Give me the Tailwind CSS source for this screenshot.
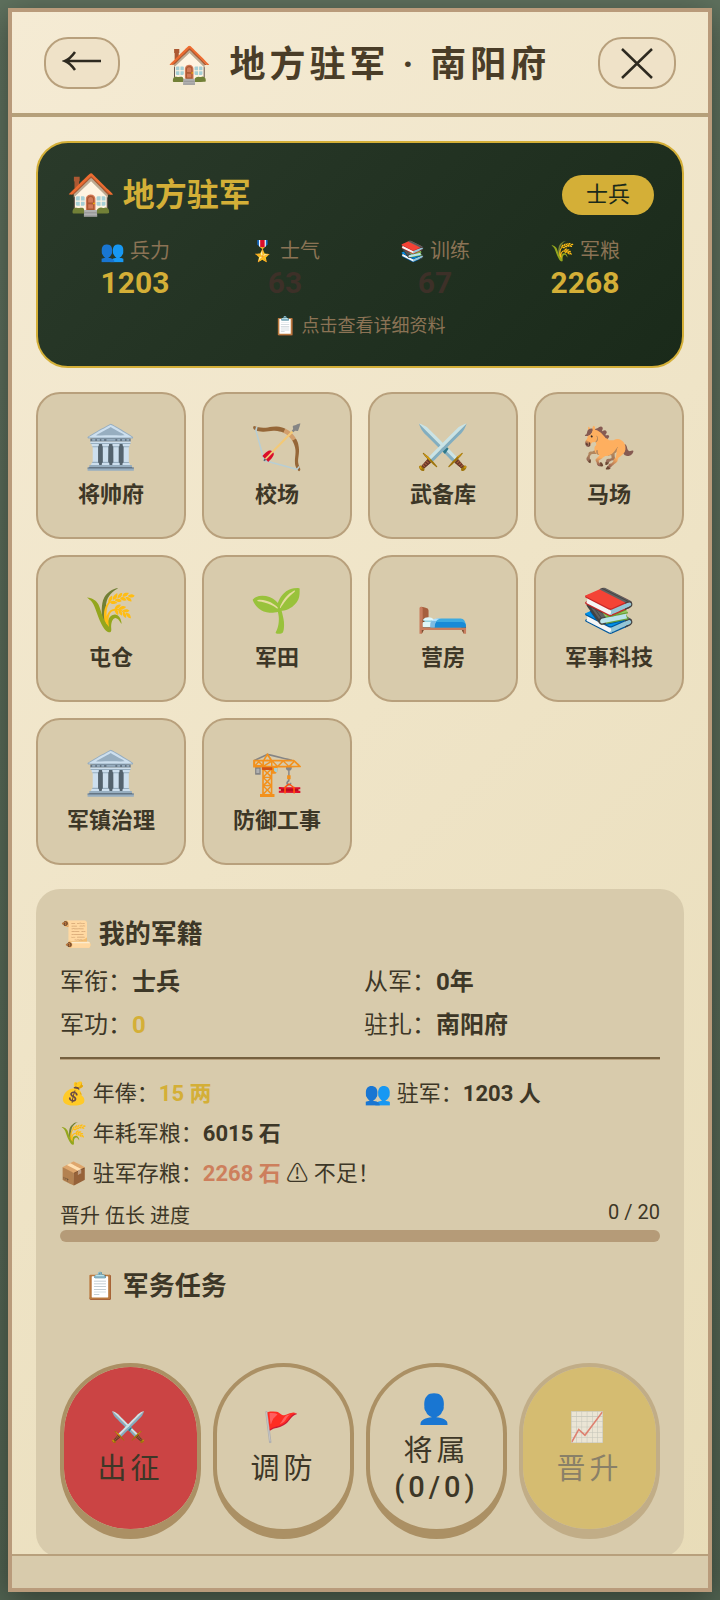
<!DOCTYPE html>
<html lang="zh-CN">
<head>
    <meta charset="UTF-8">
    <meta name="viewport" content="width=device-width, initial-scale=1.0">
    <title>地方驻军 · 南阳府</title>
    <script src="https://cdn.jsdelivr.net/npm/@tailwindcss/browser@4"></script>
    <style>
        body {
            font-family: Roboto, 'Noto Sans CJK SC', 'Noto Color Emoji', sans-serif;
        }
    </style>
</head>
<body class="h-screen overflow-hidden bg-linear-to-b from-[#5f715e] to-[#526452] p-2 text-[#3d3727]">
    <div class="flex h-full flex-col border-4 border-[#b99b7b] bg-linear-135 from-[#f5ebd4] to-[#e8dcb8] shadow-[0_8px_32px_rgba(0,0,0,0.4)]">
        <!-- Header -->
        <header class="flex h-[105px] shrink-0 items-center justify-between border-b-4 border-[#b5a07a] px-8">
            <button type="button" aria-label="返回" class="flex h-[52px] w-19 items-center justify-center rounded-3xl border-2 border-[#b8a07c] bg-[#efe2c8]">
                <svg class="h-6 w-10" viewBox="0 0 40 24" fill="none" stroke="#2e2a20" stroke-width="2.5"><path d="M39 10H3M13 1Q8 8 3 10Q8 12 13 19"/></svg>
            </button>
            <h1 class="pt-1 text-4xl font-bold tracking-[4px] text-[#4a3d28]">🏠 地方驻军 · 南阳府</h1>
            <button type="button" aria-label="关闭" class="flex h-[52px] w-[78px] items-center justify-center rounded-3xl border-2 border-[#b8a07c] bg-[#efe2c8]">
                <svg class="size-8" viewBox="0 0 32 32" fill="none" stroke="#2e2a20" stroke-width="2.5"><path d="M1 2L31 31M31 2L1 31"/></svg>
            </button>
        </header>

        <main class="flex min-h-0 flex-1 flex-col gap-6 overflow-y-auto px-6 pt-6 [scrollbar-width:none]">
            <!-- Garrison card -->
            <button type="button" class="block w-full shrink-0 rounded-4xl border-2 border-[#d4af37] bg-linear-135 from-[#2a3a2a] to-[#1a2a1a] p-7">
                <span class="flex items-center justify-between">
                    <span class="flex items-center gap-[7px] text-[32px] leading-12 font-bold text-[#d4af37]"><span class="text-[40px] font-normal">🏠</span>地方驻军</span>
                    <span class="rounded-full bg-[#d4af37] px-6 py-1 text-[22px] leading-8 text-[#1a2a1a]">士兵</span>
                </span>
                <span class="mt-[18px] grid grid-cols-4 gap-3 text-xl leading-7 text-[#8b7355]">
                    <span>👥 兵力<b class="block text-3xl text-[#d4af37]">1203</b></span>
                    <span>🎖️ 士气<b class="block text-3xl text-[#3d3028]">63</b></span>
                    <span>📚 训练<b class="block text-3xl text-[#3d3028]">67</b></span>
                    <span>🌾 军粮<b class="block text-3xl text-[#d4af37]">2268</b></span>
                </span>
                <span class="mt-[13px] block text-lg leading-6 text-[#8b7355]">📋 点击查看详细资料</span>
            </button>

            <!-- Facilities -->
            <nav class="grid shrink-0 auto-rows-[147px] grid-cols-4 gap-4 text-[22px] leading-8 font-bold">
                <button type="button" class="rounded-3xl border-2 border-[#b8a07c] bg-[#d8cbac] pb-0.5"><span class="mb-1 block text-[43px] leading-14 font-normal">🏛️</span>将帅府</button>
                <button type="button" class="rounded-3xl border-2 border-[#b8a07c] bg-[#d8cbac] pb-0.5"><span class="mb-1 block text-[43px] leading-14 font-normal">🏹</span>校场</button>
                <button type="button" class="rounded-3xl border-2 border-[#b8a07c] bg-[#d8cbac] pb-0.5"><span class="mb-1 block text-[43px] leading-14 font-normal">⚔️</span>武备库</button>
                <button type="button" class="rounded-3xl border-2 border-[#b8a07c] bg-[#d8cbac] pb-0.5"><span class="mb-1 block text-[43px] leading-14 font-normal">🐎</span>马场</button>
                <button type="button" class="rounded-3xl border-2 border-[#b8a07c] bg-[#d8cbac] pb-0.5"><span class="mb-1 block text-[43px] leading-14 font-normal">🌾</span>屯仓</button>
                <button type="button" class="rounded-3xl border-2 border-[#b8a07c] bg-[#d8cbac] pb-0.5"><span class="mb-1 block text-[43px] leading-14 font-normal">🌱</span>军田</button>
                <button type="button" class="rounded-3xl border-2 border-[#b8a07c] bg-[#d8cbac] pb-0.5"><span class="mb-1 block text-[43px] leading-14 font-normal">🛏️</span>营房</button>
                <button type="button" class="rounded-3xl border-2 border-[#b8a07c] bg-[#d8cbac] pb-0.5"><span class="mb-1 block text-[43px] leading-14 font-normal">📚</span>军事科技</button>
                <button type="button" class="rounded-3xl border-2 border-[#b8a07c] bg-[#d8cbac] pb-0.5"><span class="mb-1 block text-[43px] leading-14 font-normal">🏛️</span>军镇治理</button>
                <button type="button" class="rounded-3xl border-2 border-[#b8a07c] bg-[#d8cbac] pb-0.5"><span class="mb-1 block text-[43px] leading-14 font-normal">🏗️</span>防御工事</button>
            </nav>

            <!-- Service record -->
            <section class="shrink-0 rounded-3xl bg-[#d8cbac] px-6 pt-[25px] pb-[18px]">
                <h2 class="text-[26px] leading-10 font-bold">📜 我的军籍</h2>
                <div class="mt-[10px] grid grid-cols-2 gap-x-2 gap-y-[7px] text-2xl leading-9">
                    <p>军衔：<b>士兵</b></p>
                    <p>从军：<b>0年</b></p>
                    <p>军功：<b class="text-[#d4af37]">0</b></p>
                    <p>驻扎：<b>南阳府</b></p>
                </div>
                <hr class="mt-[14px] border-t-2 border-b border-t-[#75603f] border-b-[#b8a07c]">
                <div class="mt-[18px] grid grid-cols-2 gap-2 text-[22px] leading-8">
                    <p>💰 年俸：<b class="text-[#d4af37]">15 两</b></p>
                    <p>👥 驻军：<b>1203 人</b></p>
                    <p class="col-span-2">🌾 年耗军粮：<b>6015 石</b></p>
                    <p class="col-span-2">📦 驻军存粮：<b class="text-[#cd7f5c]">2268 石</b> ⚠ 不足！</p>
                </div>
                <div class="mt-3 flex items-start justify-between text-xl">
                    <span id="rank-progress" class="leading-7">晋升 伍长 进度</span>
                    <span class="leading-5">0 / 20</span>
                </div>
                <div role="progressbar" aria-labelledby="rank-progress" aria-valuenow="0" aria-valuemax="20" class="h-3 rounded-full bg-[#b59b78]"></div>
                <h2 class="mt-6 px-6 text-[26px] leading-10 font-bold">📋 军务任务</h2>

                <div class="mt-[57px] grid grid-cols-4 gap-3 text-[29px] leading-9 tracking-[4px]">
                    <button type="button" class="h-44 rounded-full border-4 border-b-[10px] border-[#ab9064] bg-[#cb4444] bg-clip-padding pb-0.5"><span class="mb-1 block leading-10">⚔️</span>出征</button>
                    <button type="button" class="h-44 rounded-full border-4 border-b-[10px] border-[#ab9064] pb-0.5"><span class="mb-1 block leading-10">🚩</span>调防</button>
                    <button type="button" class="h-44 rounded-full border-4 border-b-[10px] border-[#ab9064] pb-0.5"><span class="mb-1 block leading-10">👤</span>将属<span class="block font-medium">(0/0)</span></button>
                    <button type="button" disabled class="h-44 rounded-full border-4 border-b-[10px] border-[#ab9064] bg-[#d4af37] bg-clip-padding pb-0.5 opacity-50"><span class="mb-1 block leading-10">📈</span>晋升</button>
                </div>
            </section>
        </main>

        <footer class="h-[34px] shrink-0 border-t-2 border-[#b8a07c] bg-[#d8cbac]"></footer>
    </div>
</body>
</html>
